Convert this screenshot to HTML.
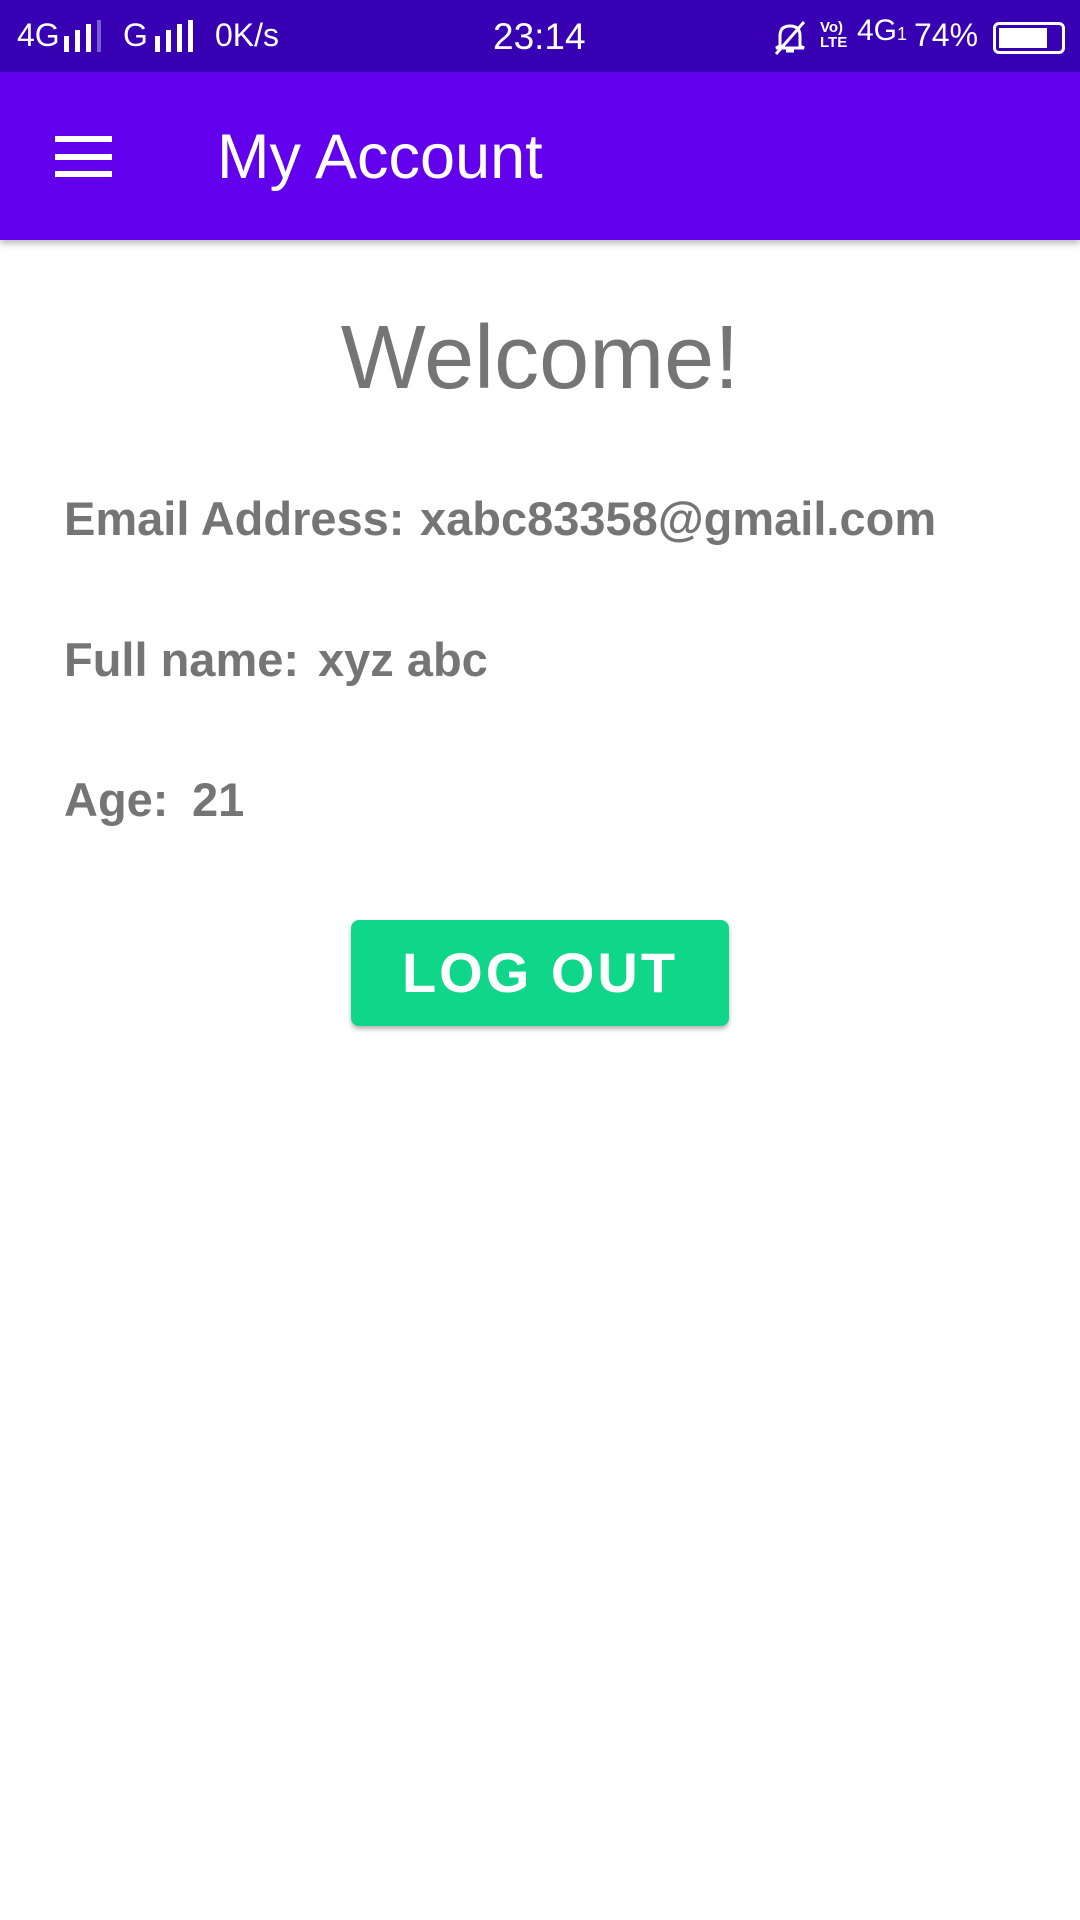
<!DOCTYPE html>
<html><head><meta charset="utf-8"><style>
body{margin:0;width:1080px;height:1920px;background:#fff;font-family:"Liberation Sans",sans-serif;position:relative;overflow:hidden}
.abs{position:absolute;white-space:nowrap}
.sb{top:0;left:0;width:1080px;height:72px;background:#3700b3}
.ab{top:72px;left:0;width:1080px;height:168px;background:#6200ee;box-shadow:0 4px 6px rgba(0,0,0,.25)}
.st{color:#fff;font-size:32px;top:17px}
.lbl{color:#757575;font-weight:bold;font-size:47px}
.hb{left:55px;width:57px;height:6px;background:#fff}
</style></head><body>
<div class="abs sb"></div>
<div class="abs st" style="left:17px">4G</div>
<svg class="abs" style="left:64px;top:20px" width="40" height="32"><rect x="0" y="16" width="5" height="16" fill="#fff"/><rect x="11" y="10" width="5" height="22" fill="#fff"/><rect x="22" y="4" width="5" height="28" fill="#fff"/><rect x="33" y="0" width="4" height="32" fill="#7a5fd0"/></svg>
<div class="abs st" style="left:123px">G</div>
<svg class="abs" style="left:155px;top:20px" width="45" height="32"><rect x="0" y="16" width="5" height="16" fill="#fff"/><rect x="11" y="10" width="5" height="22" fill="#fff"/><rect x="22" y="4" width="5" height="28" fill="#fff"/><rect x="33" y="0" width="5" height="32" fill="#fff"/></svg>
<div class="abs st" style="left:215px">0K/s</div>
<div class="abs st" style="left:493px;font-size:37px;top:16px">23:14</div>
<svg class="abs" style="left:772px;top:20px" width="36" height="36"><path d="M8 26 L8 16 Q8 6 18 6 Q28 6 28 16 L28 26 L32 28 L4 28 Z M14 31 L22 31" stroke="#fff" stroke-width="3" fill="none"/><path d="M4 34 L32 2" stroke="#fff" stroke-width="3"/></svg>
<div class="abs" style="left:820px;top:20px;color:#fff;font-size:15px;font-weight:bold;line-height:15px">Vo)<br>LTE</div>
<div class="abs st" style="left:857px;top:14px;font-size:30px">4G<span style="font-size:18px">1</span></div>
<div class="abs st" style="left:914px">74%</div>
<div class="abs" style="left:993px;top:22px;width:66px;height:26px;border:3px solid #fff;border-radius:6px"><div style="margin:3px;width:48px;height:20px;background:#fff"></div></div>
<div class="abs ab"></div>
<div class="abs hb" style="top:136px"></div>
<div class="abs hb" style="top:154px"></div>
<div class="abs hb" style="top:171px"></div>
<div class="abs" style="left:217px;top:121px;color:#fff;font-size:63px">My Account</div>
<div class="abs" style="left:0;width:1080px;text-align:center;top:307px;font-size:90px;color:#757575">Welcome!</div>
<div class="abs lbl" style="left:64px;top:491px">Email Address:</div>
<div class="abs lbl" style="left:420px;top:491px">xabc83358@gmail.com</div>
<div class="abs lbl" style="left:64px;top:632px">Full name:</div>
<div class="abs lbl" style="left:318px;top:632px">xyz abc</div>
<div class="abs lbl" style="left:64px;top:772px">Age:</div>
<div class="abs lbl" style="left:192px;top:772px">21</div>
<div class="abs" style="left:351px;top:920px;width:378px;height:106px;background:#10d68a;border-radius:8px;box-shadow:0 3px 5px rgba(0,0,0,.3);color:#fff;font-weight:bold;font-size:56px;letter-spacing:3px;text-align:center;line-height:106px">LOG OUT</div>
</body></html>
